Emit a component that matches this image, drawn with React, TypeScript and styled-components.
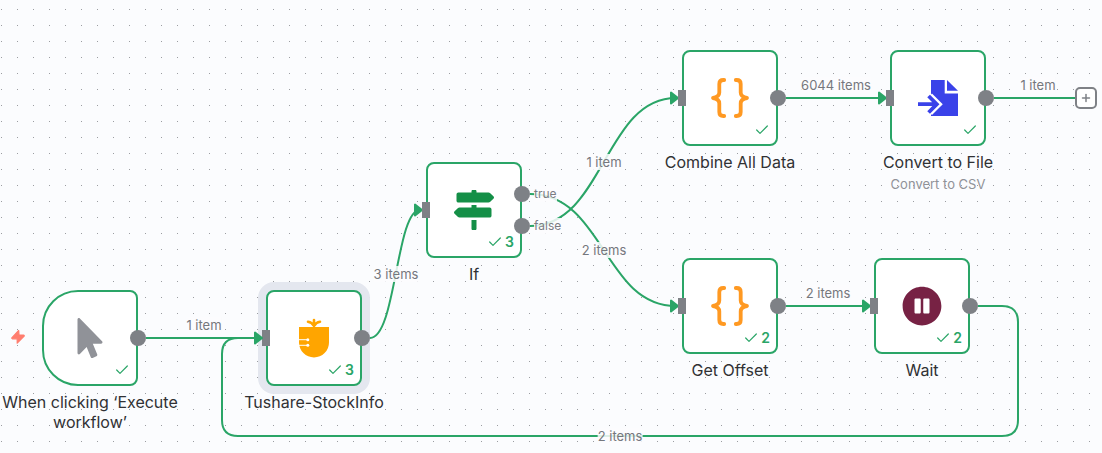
import React from "react";
import styled, { createGlobalStyle } from "styled-components";
import { Check, Plus } from "lucide-react";
import { FaMapSigns, FaMousePointer, FaPauseCircle } from "react-icons/fa";

const GREEN = "#2aa567";
const HANDLE = "#7e8186";

const GlobalStyle = createGlobalStyle`
  * { box-sizing: border-box; }
  body {
    margin: 0;
    background: #fbfcfe;
    font-family: Inter, "Liberation Sans", sans-serif;
  }
`;

const Canvas = styled.main`
  position: relative;
  width: 100%;
  min-height: 100vh;
  overflow: hidden;
  background-color: #fbfcfe;
`;

const Wires = styled.svg`
  position: absolute;
  inset: 0;
  width: 100%;
  height: 100%;
`;

const Node = styled.article<{ $x: number; $y: number }>`
  position: absolute;
  left: ${(p) => p.$x}px;
  top: ${(p) => p.$y}px;
  width: 96px;
  display: flex;
  flex-direction: column;
  align-items: center;
`;

const Card = styled.div<{ $trigger?: boolean; $selected?: boolean }>`
  position: relative;
  display: grid;
  place-items: center;
  width: 96px;
  height: 96px;
  background: #fff;
  border: 2px solid ${GREEN};
  border-radius: ${(p) => (p.$trigger ? "36px 8px 8px 36px" : "8px")};
  box-shadow: ${(p) => (p.$selected ? "0 0 0 8px #e4e7ef" : "none")};
`;

const Status = styled.div`
  position: absolute;
  right: 6px;
  bottom: 6px;
  display: flex;
  align-items: center;
  gap: 2px;
  height: 16px;
  color: ${GREEN};
  font-size: 14px;
  line-height: 16px;
  font-weight: 600;
`;

const Title = styled.h2`
  width: 192px;
  margin: 6px 0 0;
  color: #303134;
  font-size: 16px;
  line-height: 20px;
  font-weight: 400;
  text-align: center;
`;

const Subtitle = styled.p`
  margin: 4px 0 0;
  color: #909298;
  font-size: 13px;
  line-height: 16px;
  white-space: nowrap;
`;

const Ports = styled.div<{ $side: "in" | "out" }>`
  position: absolute;
  top: 0;
  bottom: 0;
  ${(p) => (p.$side === "in" ? "left: -6px;" : "left: 86px;")}
  display: flex;
  flex-direction: column;
  justify-content: center;
  gap: 16px;
`;

const InputHandle = styled.span`
  width: 8px;
  height: 16px;
  background: ${HANDLE};
`;

const Output = styled.div`
  display: flex;
  align-items: center;
  gap: 4px;
  height: 16px;
`;

const OutputHandle = styled.span`
  width: 16px;
  height: 16px;
  border-radius: 50%;
  background: ${HANDLE};
`;

const BranchLabel = styled.span`
  background: rgba(251, 252, 254, 0.85);
  color: #7b7d83;
  font-size: 12px;
  line-height: 16px;
`;

const WireLabel = styled.span<{ $x: number; $y: number }>`
  position: absolute;
  left: ${(p) => p.$x}px;
  top: ${(p) => p.$y}px;
  transform: translate(-50%, -50%);
  background: rgba(251, 252, 254, 0.85);
  color: #75777d;
  font-size: 13px;
  line-height: 16px;
  white-space: nowrap;
`;

const AddButton = styled.button`
  position: absolute;
  left: 1075px;
  top: 87px;
  display: grid;
  place-items: center;
  width: 22px;
  height: 22px;
  padding: 0;
  background: #fff;
  color: ${HANDLE};
  border: 2px solid ${HANDLE};
  border-radius: 5px;
  cursor: pointer;
`;

const TriggerMark = styled.svg`
  position: absolute;
  left: 10px;
  top: 329px;
  width: 16px;
  height: 16px;
`;

const BracesIcon = () => (
  <svg width="40" height="40" viewBox="0 0 40 40" fill="none" stroke="#ff9922" strokeWidth="3.8" strokeLinecap="round" strokeLinejoin="round">
    <path d="M14.2 2H13.4Q9.300 2 9.300 6V14.500Q9.300 19 3 20Q9.300 21 9.300 25.500V34Q9.300 38 13.400 38H14.200" />
    <path d="M25.800 2H26.600Q30.700 2 30.700 6V14.500Q30.700 19 37 20Q30.700 21 30.700 25.500V34Q30.700 38 26.600 38H25.800" />
  </svg>
);

const FileIcon = () => (
  <svg width="40" height="40" viewBox="0 0 40 40">
    <path d="M13 2H26.7V15.5H40V38H13Z" fill="#3a42e9" />
    <path d="M29 2L40 12.7H29Z" fill="#3a42e9" />
    <path d="M11.5 18L19.8 26.2L11.5 34.5" fill="none" stroke="#fff" strokeWidth="7" />
    <path d="M0 26.2H19M10.6 18L18.8 26.2L10.6 34.5" fill="none" stroke="#3a42e9" strokeWidth="3.8" />
  </svg>
);

const PineappleIcon = () => (
  <svg width="40" height="40" viewBox="0 0 40 40">
    <path d="M5 9H35V24.500A15 15 0 0 1 5 24.500Z" fill="#ffa500" />
    <path d="M20 8V2M19.500 7.500Q18 4.500 14 3.800M20.500 7.500Q22 4.500 26 3.800" fill="none" stroke="#ffa500" strokeWidth="2.600" strokeLinecap="round" />
    <path d="M5 21.700H13M5 27.300H13" stroke="#fff" strokeWidth="1" />
    <circle cx="13.800" cy="21.700" r="1.500" fill="#fff" />
    <circle cx="13.800" cy="27.300" r="1.500" fill="#fff" />
  </svg>
);

type NodeSpec = {
  title: string;
  subtitle?: string;
  x: number;
  y: number;
  icon: React.ReactNode;
  runs?: number;
  trigger?: boolean;
  selected?: boolean;
  branches?: string[];
};

const nodes: NodeSpec[] = [
  { title: "When clicking ‘Execute workflow’", x: 42, y: 290, icon: <FaMousePointer size={40} color="#909298" />, trigger: true },
  { title: "Tushare-StockInfo", x: 266, y: 290, icon: <PineappleIcon />, runs: 3, selected: true },
  { title: "If", x: 426, y: 162, icon: <FaMapSigns size={40} color="#148f47" />, runs: 3, branches: ["true", "false"] },
  { title: "Combine All Data", x: 682, y: 50, icon: <BracesIcon /> },
  { title: "Convert to File", subtitle: "Convert to CSV", x: 890, y: 50, icon: <FileIcon /> },
  { title: "Get Offset", x: 682, y: 258, icon: <BracesIcon />, runs: 2 },
  { title: "Wait", x: 874, y: 258, icon: <FaPauseCircle size={40} color="#772244" />, runs: 2 },
];

const wires = [
  { path: "M146 338H258", label: "1 item", x: 204, y: 325, tip: [262, 338] },
  { path: "M370 338C396 338 396 210 420 210", label: "3 items", x: 396, y: 274, tip: [422, 210] },
  { path: "M530 226C604 226 604 98 676 98", label: "1 item", x: 604, y: 162, tip: [678, 98] },
  { path: "M530 194C604 194 604 306 676 306", label: "2 items", x: 604, y: 250, tip: [678, 306] },
  { path: "M786 98H882", label: "6044 items", x: 836, y: 85, tip: [886, 98] },
  { path: "M786 306H866", label: "2 items", x: 828, y: 293, tip: [870, 306] },
  { path: "M994 98H1076", label: "1 item", x: 1038, y: 85 },
  { path: "M978 306H1002Q1018 306 1018 322V420Q1018 436 1002 436H238Q222 436 222 420V354Q222 338 238 338H258", label: "2 items", x: 620, y: 436 },
];

function WorkflowNode({ node }: { node: NodeSpec }) {
  const outputs = node.branches ?? [""];
  return (
    <Node $x={node.x} $y={node.y}>
      <Card $trigger={node.trigger} $selected={node.selected}>
        {node.icon}
        <Status>
          <Check size={16} strokeWidth={1.8} />
          {node.runs}
        </Status>
        {!node.trigger && (
          <Ports $side="in">
            <InputHandle />
          </Ports>
        )}
        <Ports $side="out">
          {outputs.map((label) => (
            <Output key={label}>
              <OutputHandle />
              {label && <BranchLabel>{label}</BranchLabel>}
            </Output>
          ))}
        </Ports>
      </Card>
      <Title>{node.title}</Title>
      {node.subtitle && <Subtitle>{node.subtitle}</Subtitle>}
    </Node>
  );
}

export default function App() {
  return (
    <>
      <GlobalStyle />
      <Canvas>
        <Wires aria-hidden="true">
          <defs>
            <pattern id="dots" width="16" height="16" patternUnits="userSpaceOnUse">
              <rect x="1" y="9" width="1" height="1" fill="#9b9da1" />
            </pattern>
          </defs>
          <rect width="100%" height="100%" fill="url(#dots)" />
        </Wires>
        {nodes.filter((n) => n.selected).map((n) => (
          <WorkflowNode key={n.title} node={n} />
        ))}
        <Wires aria-hidden="true">
          {wires.map((w) => (
            <path key={w.path} d={w.path} fill="none" stroke={GREEN} strokeWidth="2" />
          ))}
          {wires.map((w) =>
            w.tip ? (
              <path
                key={w.path}
                d="M0 0L-7 -5.500V5.500Z"
                transform={`translate(${w.tip[0]} ${w.tip[1]})`}
                fill={GREEN}
                stroke={GREEN}
                strokeWidth="2"
                strokeLinejoin="round"
              />
            ) : null
          )}
        </Wires>
        {wires.map((w) => (
          <WireLabel key={w.path} $x={w.x} $y={w.y}>
            {w.label}
          </WireLabel>
        ))}
        <TriggerMark viewBox="0 0 16 16" aria-hidden="true">
          <path
            d="M8.700 1.500L1.800 8.800Q1.600 9.600 2.500 9.800H7.200V14.200L14.200 7Q14.400 6.200 13.500 6H9Z"
            fill="#ff7d6e"
            stroke="#ff7d6e"
            strokeWidth="1.200"
            strokeLinejoin="round"
          />
        </TriggerMark>
        {nodes.filter((n) => !n.selected).map((n) => (
          <WorkflowNode key={n.title} node={n} />
        ))}
        <AddButton type="button" aria-label="Add node">
          <Plus size={12} strokeWidth={3} />
        </AddButton>
      </Canvas>
    </>
  );
}
